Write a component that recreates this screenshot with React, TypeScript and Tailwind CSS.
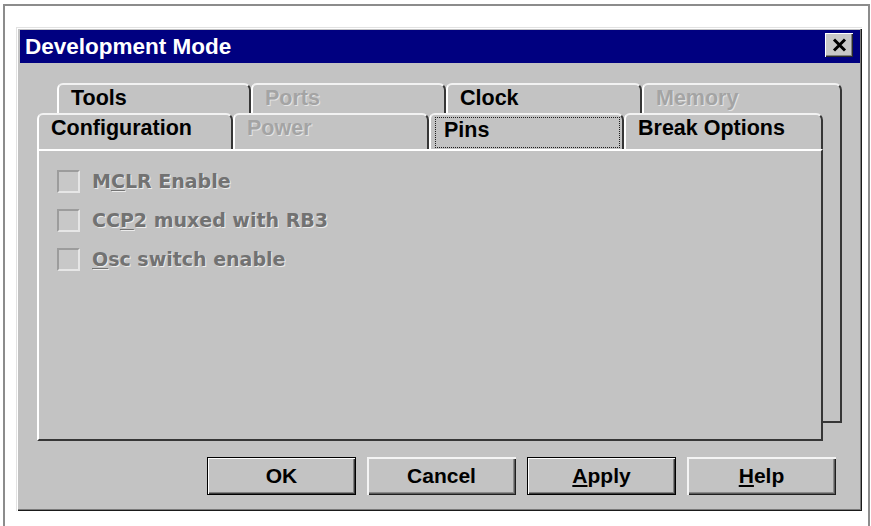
import React from "react";

type TabProps = {
  label: string;
  width: string;
  disabled?: boolean;
  focused?: boolean;
};

const tabFrame =
  "h-full shrink-0 bg-[#c3c3c3] border-l-2 border-t-2 border-r-2 border-l-white border-t-[#f2f2f2] border-r-[#363636] rounded-tl-[6px] rounded-tr-[7px]";

function Tab({ label, width, disabled, focused }: TabProps) {
  const text = disabled
    ? "text-[#a4a4a4] [text-shadow:1px_1px_0_#e4e4e4]"
    : "text-black";
  if (focused) {
    return (
      <div className={`${tabFrame} ${width}`}>
        <div className="mt-[2px] ml-[4px] mr-[2px] h-[31px] border border-dotted border-[#1e1e1e]">
          <div className={`pl-[8px] pt-[1px] text-[21.5px] leading-[22px] font-bold ${text}`}>
            {label}
          </div>
        </div>
      </div>
    );
  }
  return (
    <div className={`${tabFrame} ${width}`}>
      <div className={`pl-[12px] pt-[2px] text-[21.5px] leading-[22px] font-bold ${text}`}>
        {label}
      </div>
    </div>
  );
}

function CheckRow({ children }: { children: React.ReactNode }) {
  return (
    <div className="flex items-center h-[23px] gap-[12px]">
      <div className="w-[23px] h-[23px] bg-[#c8c8c8] border-2 border-t-[#9c9c9c] border-l-[#9c9c9c] border-b-[#e6e6e6] border-r-[#e6e6e6]" />
      <span className="font-['DejaVu_Sans',sans-serif] font-bold text-[19px] leading-[23px] text-[#727272] [text-shadow:1px_1px_0_#ececec]">
        {children}
      </span>
    </div>
  );
}

function PushButton({
  children,
  isDefault,
}: {
  children: React.ReactNode;
  isDefault?: boolean;
}) {
  const frame = isDefault
    ? "border border-black shadow-[inset_1px_1px_0_#ffffff,inset_-1px_-1px_0_#3a3a3a,inset_-2px_-2px_0_#808080]"
    : "shadow-[inset_2px_2px_0_#f4f4f4,inset_-1px_-1px_0_#1e1e1e,inset_-2px_-2px_0_#5a5a5a,inset_-3px_-3px_0_#8a8a8a]";
  return (
    <div
      className={`w-[149px] h-[38px] bg-[#c3c3c3] flex items-center justify-center text-[21px] font-bold text-black ${frame}`}
    >
      {children}
    </div>
  );
}

function Dialog() {
  return (
    <div className="w-[846px] h-[484px] bg-[#c3c3c3] pt-[3px] pl-[4px] pr-[2px] shadow-[inset_1px_1px_0_#e2e2e2,inset_2px_2px_0_#ffffff,inset_-1px_-1px_0_#1a1a1a,inset_-2px_-2px_0_#7a7a7a]">
      {/* caption */}
      <div className="h-[33px] bg-[#000080] flex items-start justify-between">
        <span className="pl-[5px] text-[22.5px] leading-[33px] font-bold text-white">
          Development Mode
        </span>
        <div className="mt-[3px] mr-[7px] w-[28px] h-[24px] bg-[#c8c8c8] flex items-center justify-center shadow-[inset_1px_1px_0_#ffffff,inset_-1px_-1px_0_#2a2a2a,inset_-2px_-2px_0_#808080]">
          <svg width="15" height="14" viewBox="0 0 15 14">
            <path d="M2 1.5 L13 12.5 M13 1.5 L2 12.5" stroke="#000" strokeWidth="3" />
          </svg>
        </div>
      </div>

      {/* property sheet */}
      <div className="ml-[17px] mt-[20px] w-[805px]">
        <div className="flex h-[30px] pl-[20px]">
          <Tab label="Tools" width="w-[194px]" />
          <Tab label="Ports" width="w-[195px]" disabled />
          <Tab label="Clock" width="w-[196px]" />
          <Tab label="Memory" width="w-[200px]" disabled />
        </div>
        <div className="flex items-start">
          <div className="w-[786px] shrink-0">
            <div className="flex h-[36px]">
              <Tab label="Configuration" width="w-[196px]" />
              <Tab label="Power" width="w-[196px]" disabled />
              <Tab label="Pins" width="w-[195px]" focused />
              <Tab label="Break Options" width="w-[199px]" />
            </div>
            <div className="h-[292px] border-2 border-l-white border-t-white border-r-[#363636] border-b-[#363636] pt-[19px] pl-[18px] flex flex-col gap-[16px]">
              <CheckRow>
                M<u className="underline-offset-2">C</u>LR Enable
              </CheckRow>
              <CheckRow>
                CC<u className="underline-offset-2">P</u>2 muxed with RB3
              </CheckRow>
              <CheckRow>
                <u className="underline-offset-2">O</u>sc switch enable
              </CheckRow>
            </div>
          </div>
          <div className="w-[19px] h-[310px] border-r-2 border-b-2 border-[#363636]" />
        </div>
      </div>

      {/* command buttons */}
      <div className="flex gap-[11px] ml-[187px] mt-[16px]">
        <PushButton isDefault>OK</PushButton>
        <PushButton>Cancel</PushButton>
        <PushButton isDefault>
          <span>
            <u className="underline-offset-2">A</u>pply
          </span>
        </PushButton>
        <PushButton>
          <span>
            <u className="underline-offset-2">H</u>elp
          </span>
        </PushButton>
      </div>
    </div>
  );
}

export default function App() {
  return (
    <div className="w-[871px] h-[526px] overflow-hidden bg-white pt-[4px] pl-[3px] pr-[1px] font-['Liberation_Sans',Arial,sans-serif]">
      <div className="h-[540px] border-t-2 border-l-2 border-r-2 border-[#8c8c8c] pt-[21px] pl-[11px]">
        <Dialog />
      </div>
    </div>
  );
}
